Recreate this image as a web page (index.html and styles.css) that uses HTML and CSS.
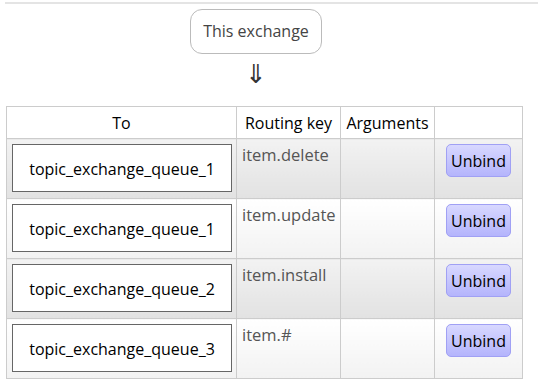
FILE: index.html
```html
<!DOCTYPE html>
<html lang="en">
<head>
    <meta charset="UTF-8">
    <title>Bindings</title>
    <link rel="stylesheet" href="styles.css">
</head>
<body>
    <div class="top-rule"></div>
    <div class="source">
        <span class="exchange-box">This exchange</span>
        <div class="arrow">&#8659;</div>
    </div>
    <table class="bindings">
        <thead>
            <tr>
                <th class="col-to">To</th>
                <th class="col-key">Routing key</th>
                <th class="col-args">Arguments</th>
                <th class="col-action"></th>
            </tr>
        </thead>
        <tbody>
            <tr class="alt1">
                <td><span class="queue-box">topic_exchange_queue_1</span></td>
                <td class="key">item.delete</td>
                <td></td>
                <td class="action"><button>Unbind</button></td>
            </tr>
            <tr class="alt2">
                <td><span class="queue-box">topic_exchange_queue_1</span></td>
                <td class="key">item.update</td>
                <td></td>
                <td class="action"><button>Unbind</button></td>
            </tr>
            <tr class="alt1">
                <td><span class="queue-box">topic_exchange_queue_2</span></td>
                <td class="key">item.install</td>
                <td></td>
                <td class="action"><button>Unbind</button></td>
            </tr>
            <tr class="alt2">
                <td><span class="queue-box">topic_exchange_queue_3</span></td>
                <td class="key">item.#</td>
                <td></td>
                <td class="action"><button>Unbind</button></td>
            </tr>
        </tbody>
    </table>
</body>
</html>
```

FILE: styles.css
```css
body {
    margin: 0;
    font-family: "Open Sans", "DejaVu Sans", sans-serif;
    font-size: 16px;
    color: #444;
    background: white;
}
.top-rule {
    margin: 2px 0 0 5px;
    border-top: 2px solid #e4e4e4;
}
.source {
    width: 512px;
    text-align: center;
    padding-top: 5px;
}
.exchange-box {
    display: inline-block;
    border: 1px solid #bbb;
    border-radius: 12px;
    padding: 12px 12px;
    font-size: 16px;
    line-height: 19px;
    color: #444;
}
.arrow {
    font-size: 26px;
    line-height: 28px;
    color: #333;
    margin: 5px 0 0 0;
    height: 47px;
}
.bindings {
    margin-left: 6px;
    width: 515px;
    table-layout: fixed;
    border-collapse: collapse;
}
.bindings th, .bindings td {
    border: 1px solid #ccc;
}
.bindings th {
    height: 31px;
    padding: 0 4px;
    font-weight: normal;
    font-size: 16px;
    color: #000;
    background: white;
    white-space: nowrap;
}
.col-to { width: 221px; }
.col-key { width: 95px; }
.col-args { width: 85px; }
.col-action { width: 79px; }
.bindings td {
    height: 48px;
    padding: 5px 5px 6px 5px;
    vertical-align: top;
}
.alt1 td {
    background: linear-gradient(#f2f2f2, #e2e2e2);
}
.alt2 td {
    background: linear-gradient(#ffffff, #f2f2f2);
}
.queue-box {
    display: block;
    box-sizing: border-box;
    width: 220px;
    height: 48px;
    line-height: 48px;
    border: 1px solid #666;
    background: white;
    color: #000;
    text-align: center;
    font-size: 16px;
}
.key {
    font-size: 16.5px;
    color: #555;
    line-height: 22px;
}
.action {
    text-align: center;
}
button {
    font-family: "Open Sans", "DejaVu Sans", sans-serif;
    font-size: 16px;
    color: #000;
    width: 65px;
    height: 33px;
    padding: 0;
    border: 1px solid #a0a0f4;
    border-radius: 5px;
    background: linear-gradient(#d8d8ff, #b4b4fc);
}
```
